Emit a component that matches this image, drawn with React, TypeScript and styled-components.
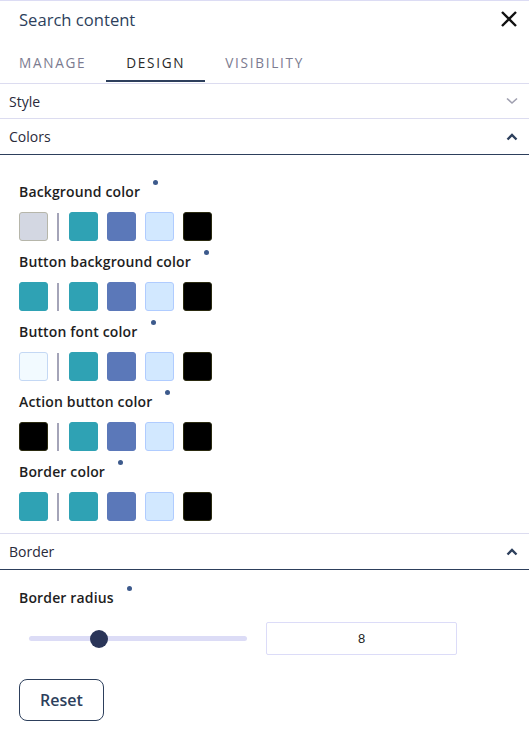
import React from "react";
import styled, { createGlobalStyle } from "styled-components";

const Global = createGlobalStyle`
  html, body { margin: 0; padding: 0; background: #fff; }
  body { font-family: "Open Sans", "Noto Sans", sans-serif; color: #1f1f1f; }
  * { box-sizing: border-box; }
`;

const Panel = styled.div`
  width: 529px;
  min-height: 743px;
  background: #fff;
  border-top: 1px solid #dcdcf4;
`;

const Header = styled.div`
  display: flex;
  align-items: center;
  justify-content: space-between;
  height: 36px;
  padding: 0 10px 0 19px;
`;

const Title = styled.div`
  font-size: 16.6px;
  color: #2d3f5c;
`;

const CloseBtn = styled.button`
  border: 0;
  background: none;
  padding: 0;
  width: 20px;
  height: 20px;
  display: flex;
  align-items: center;
  justify-content: center;
  cursor: pointer;
`;

const Tabs = styled.div`
  display: flex;
  height: 47px;
  border-bottom: 1px solid #dcdcf0;
  margin-left: -1px;
`;

const Tab = styled.div<{ $active?: boolean }>`
  display: flex;
  align-items: center;
  padding: 8px 20px 0;
  font-size: 13.6px;
  letter-spacing: 1.7px;
  color: ${(p) => (p.$active ? "#2a2a2a" : "#7b7b90")};
  border-bottom: 2px solid ${(p) => (p.$active ? "#2d3f5c" : "transparent")};
  margin-bottom: 1px;
`;

const SectionHead = styled.div<{ $open?: boolean }>`
  display: flex;
  align-items: center;
  justify-content: space-between;
  height: ${(p) => (p.$open ? "36px" : "35px")};
  padding: 0 10px 0 9px;
  font-size: 14px;
  color: #2a2a3a;
  border-bottom: 1px solid ${(p) => (p.$open ? "#2d3f5c" : "#dcdcf0")};
`;

const ColorsBody = styled.div`
  padding: 27px 19px 12px;
  display: flex;
  flex-direction: column;
  gap: 11px;
  border-bottom: 1px solid #dcdcf0;
`;

const Group = styled.div`
  display: flex;
  flex-direction: column;
  gap: 10px;
`;

const Label = styled.div`
  display: flex;
  align-items: flex-start;
  font-size: 14px;
  font-weight: 600;
  letter-spacing: 0.15px;
  line-height: 20px;
  color: #1e1e1e;
`;

const Dot = styled.span`
  width: 5px;
  height: 5px;
  border-radius: 50%;
  background: #3d5a8c;
  margin-left: 13px;
  margin-top: -2px;
`;

const SwatchRow = styled.div`
  display: flex;
  align-items: center;
  gap: 9px;
  height: 29px;
`;

const Swatch = styled.div<{ $color: string; $border?: string }>`
  width: 29px;
  height: 29px;
  border-radius: 3px;
  background: ${(p) => p.$color};
  border: 1px solid ${(p) => p.$border || p.$color};
`;

const Divider = styled.div`
  width: 2px;
  height: 28px;
  background: #a4a4b8;
  margin: 0 1px 0 0;
`;

const BorderBody = styled.div`
  padding: 18px 19px 22px;
  display: flex;
  flex-direction: column;
`;

const SliderRow = styled.div`
  display: flex;
  align-items: center;
  margin-top: 14px;
  padding-left: 10px;
  gap: 19px;
`;

const Track = styled.div`
  position: relative;
  width: 218px;
  height: 5px;
  border-radius: 3px;
  background: #dcdcf6;
`;

const Thumb = styled.div`
  position: absolute;
  top: 50%;
  width: 18px;
  height: 18px;
  margin-left: -9px;
  margin-top: -9px;
  border-radius: 50%;
  background: #2a3558;
`;

const NumberBox = styled.div`
  width: 191px;
  height: 33px;
  border: 1px solid #dcdcf8;
  border-radius: 2px;
  display: flex;
  align-items: center;
  justify-content: center;
  font-family: "Liberation Sans", Arial, sans-serif;
  font-size: 13px;
  color: #222;
`;

const ResetBtn = styled.button`
  margin-top: 24px;
  align-self: flex-start;
  width: 85px;
  height: 42px;
  border: 1px solid #2d3f5c;
  border-radius: 8px;
  background: #fff;
  font-family: "Open Sans", "Noto Sans", sans-serif;
  font-size: 16px;
  font-weight: 600;
  color: #2d3f5c;
  cursor: pointer;
`;

const ChevronDown = () => (
  <svg width="14" height="14" viewBox="0 0 14 14">
    <path d="M2 4.5 L7 9 L12 4.5" fill="none" stroke="#a0a0b0" strokeWidth="1.6" />
  </svg>
);

const ChevronUp = () => (
  <svg width="14" height="14" viewBox="0 0 14 14">
    <path d="M2.5 9.5 L7 5 L11.5 9.5" fill="none" stroke="#2d3f5c" strokeWidth="2.4" />
  </svg>
);

const palette = [
  { c: "#2fa2b4" },
  { c: "#5b78b9" },
  { c: "#d2e8ff", b: "#b0ccff" },
  { c: "#000000", b: "#2a2a10" },
];

const groups = [
  { label: "Background color", sel: { c: "#d3d7e2", b: "#b6b6aa" } },
  { label: "Button background color", sel: { c: "#2fa2b4" } },
  { label: "Button font color", sel: { c: "#f2faff", b: "#c4d8f4" } },
  { label: "Action button color", sel: { c: "#000000", b: "#2a2a10" } },
  { label: "Border color", sel: { c: "#2fa2b4" } },
];

export default function App() {
  const value = 8;
  const pct = (value / 25) * 100;
  return (
    <Panel>
      <Global />
      <Header>
        <Title>Search content</Title>
        <CloseBtn aria-label="Close">
          <svg width="18" height="18" viewBox="0 0 18 18">
            <path d="M2 2 L16 16 M16 2 L2 16" stroke="#111" strokeWidth="2.4" />
          </svg>
        </CloseBtn>
      </Header>
      <Tabs>
        <Tab>MANAGE</Tab>
        <Tab $active>DESIGN</Tab>
        <Tab>VISIBILITY</Tab>
      </Tabs>
      <SectionHead>
        Style
        <ChevronDown />
      </SectionHead>
      <SectionHead $open>
        Colors
        <ChevronUp />
      </SectionHead>
      <ColorsBody>
        {groups.map((g) => (
          <Group key={g.label}>
            <Label>
              {g.label}
              <Dot />
            </Label>
            <SwatchRow>
              <Swatch $color={g.sel.c} $border={g.sel.b} />
              <Divider />
              {palette.map((p) => (
                <Swatch key={p.c} $color={p.c} $border={p.b} />
              ))}
            </SwatchRow>
          </Group>
        ))}
      </ColorsBody>
      <SectionHead $open>
        Border
        <ChevronUp />
      </SectionHead>
      <BorderBody>
        <Label>
          Border radius
          <Dot />
        </Label>
        <SliderRow>
          <Track>
            <Thumb style={{ left: `${pct}%` }} />
          </Track>
          <NumberBox>{value}</NumberBox>
        </SliderRow>
        <ResetBtn>Reset</ResetBtn>
      </BorderBody>
    </Panel>
  );
}
